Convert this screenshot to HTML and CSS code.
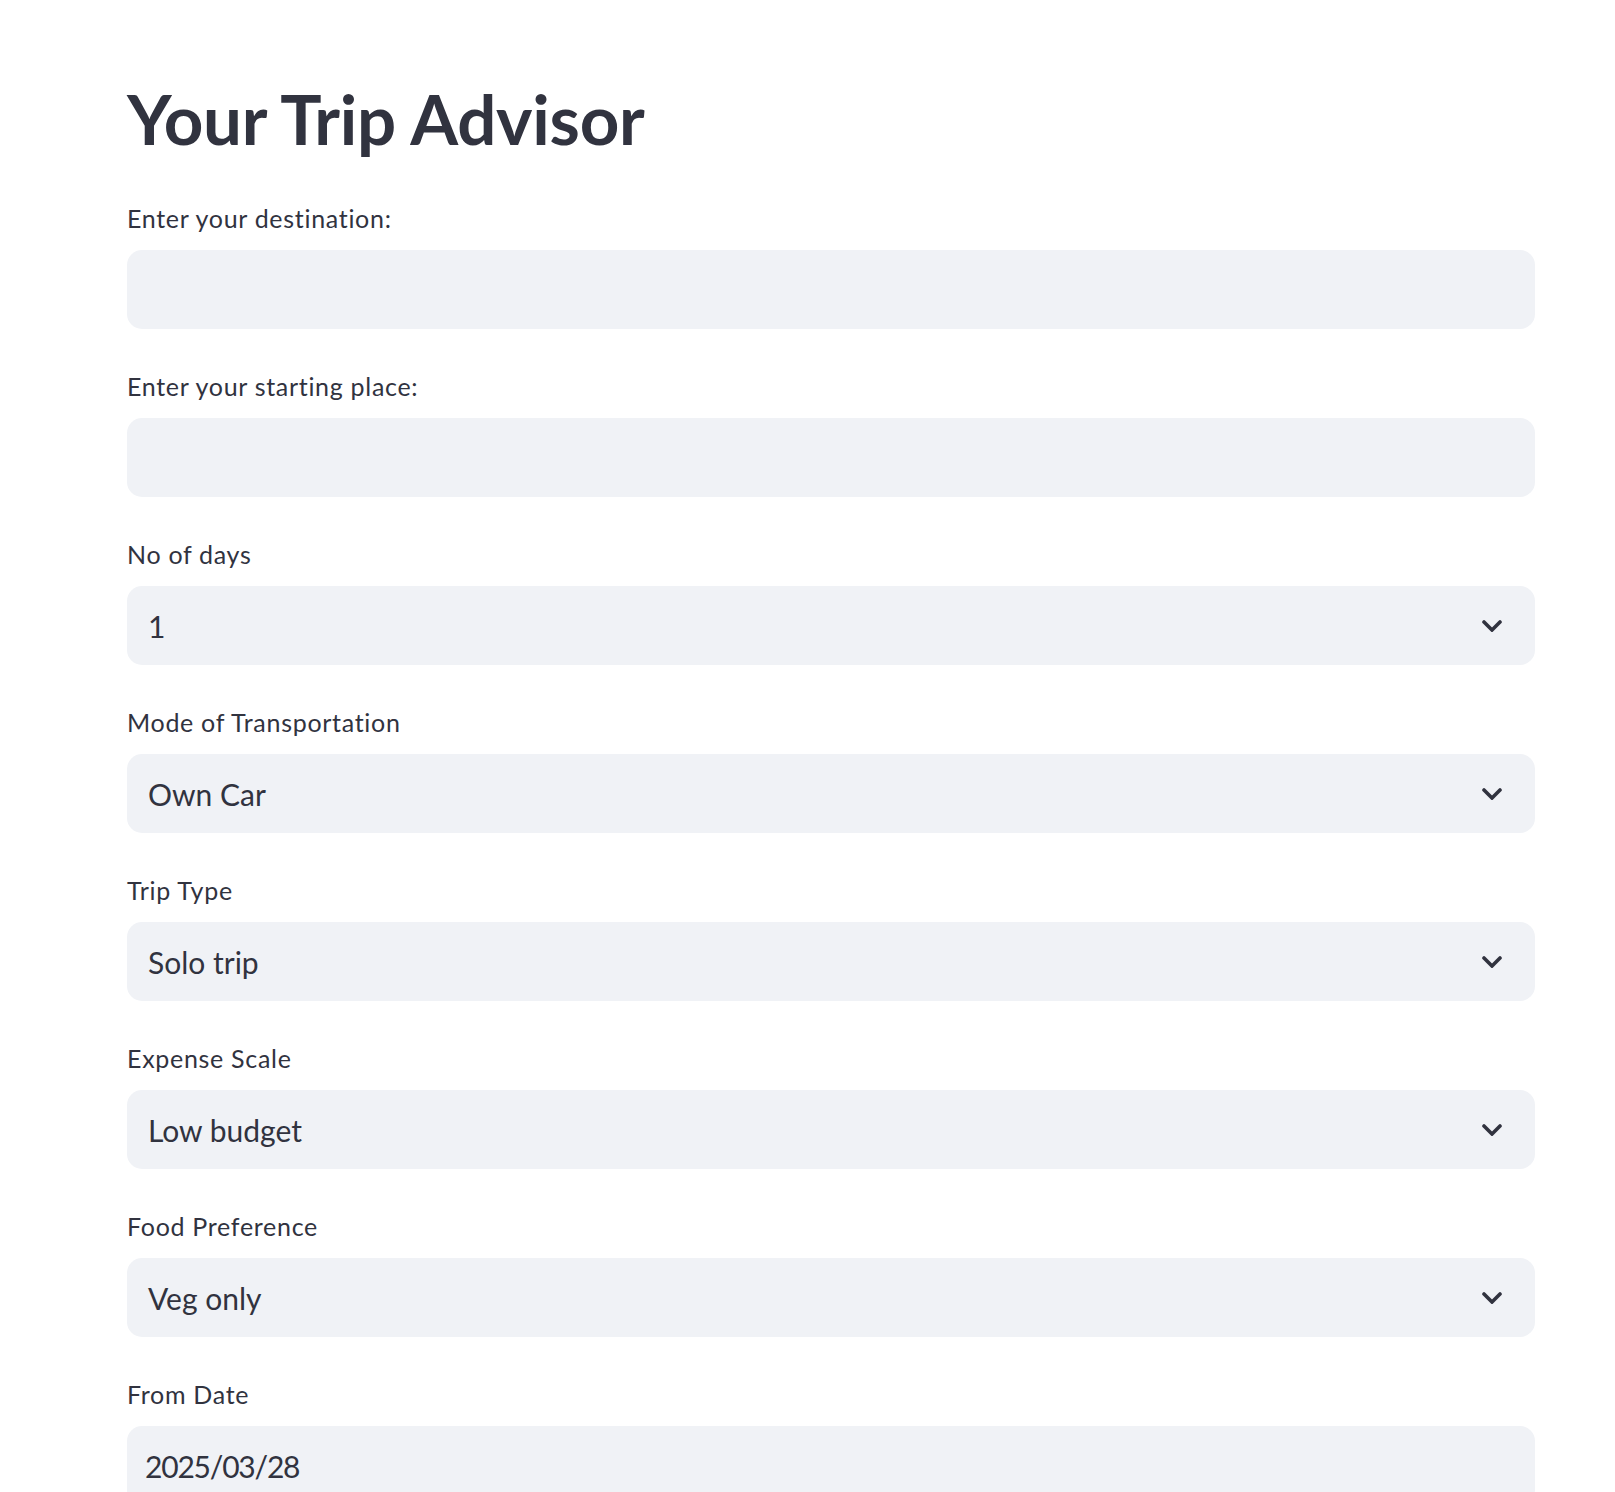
FILE: index.html
```html
<!DOCTYPE html>
<html lang="en">
<head>
<meta charset="utf-8">
<title>Your Trip Advisor</title>
<link rel="stylesheet" href="styles.css">
</head>
<body>
<main class="app">
  <h1 class="title">Your Trip Advisor</h1>
  <div class="form">
    <div class="field">
      <label class="label">Enter your destination:</label>
      <div class="box input"></div>
    </div>
    <div class="field">
      <label class="label">Enter your starting place:</label>
      <div class="box input"></div>
    </div>
    <div class="field">
      <label class="label">No of days</label>
      <div class="box select"><span class="value">1</span>
        <svg class="chev" viewBox="0 0 20 12" width="20" height="12"><polyline points="2,2 10,10 18,2" fill="none" stroke="#31333F" stroke-width="3.6" stroke-linecap="round" stroke-linejoin="miter"/></svg>
      </div>
    </div>
    <div class="field">
      <label class="label">Mode of Transportation</label>
      <div class="box select"><span class="value">Own Car</span>
        <svg class="chev" viewBox="0 0 20 12" width="20" height="12"><polyline points="2,2 10,10 18,2" fill="none" stroke="#31333F" stroke-width="3.6" stroke-linecap="round" stroke-linejoin="miter"/></svg>
      </div>
    </div>
    <div class="field">
      <label class="label">Trip Type</label>
      <div class="box select"><span class="value">Solo trip</span>
        <svg class="chev" viewBox="0 0 20 12" width="20" height="12"><polyline points="2,2 10,10 18,2" fill="none" stroke="#31333F" stroke-width="3.6" stroke-linecap="round" stroke-linejoin="miter"/></svg>
      </div>
    </div>
    <div class="field">
      <label class="label">Expense Scale</label>
      <div class="box select"><span class="value">Low budget</span>
        <svg class="chev" viewBox="0 0 20 12" width="20" height="12"><polyline points="2,2 10,10 18,2" fill="none" stroke="#31333F" stroke-width="3.6" stroke-linecap="round" stroke-linejoin="miter"/></svg>
      </div>
    </div>
    <div class="field">
      <label class="label">Food Preference</label>
      <div class="box select"><span class="value">Veg only</span>
        <svg class="chev" viewBox="0 0 20 12" width="20" height="12"><polyline points="2,2 10,10 18,2" fill="none" stroke="#31333F" stroke-width="3.6" stroke-linecap="round" stroke-linejoin="miter"/></svg>
      </div>
    </div>
    <div class="field">
      <label class="label">From Date</label>
      <div class="box date"><span class="value date-value">2025/03/28</span></div>
    </div>
  </div>
</main>
</body>
</html>
```
FILE: styles.css
```css
html, body {
  margin: 0;
  padding: 0;
  background: #ffffff;
}
body {
  font-family: Lato, "Noto Sans", sans-serif;
  color: #31333F;
}
.app {
  padding: 77px 80px 0 127px;
}
.title {
  margin: 0 0 43px 0;
  font-size: 69px;
  line-height: 83px;
  font-weight: 700;
  letter-spacing: -0.25px;
  height: 83px;
}
.form {
  display: flex;
  flex-direction: column;
  gap: 42px;
}
.field {
  display: flex;
  flex-direction: column;
  gap: 17px;
}
.label {
  display: block;
  font-size: 25px;
  line-height: 30px;
  height: 30px;
  letter-spacing: 0.7px;
}
.box {
  height: 79px;
  background: #F0F2F6;
  border-radius: 15px;
  display: flex;
  align-items: center;
  box-sizing: border-box;
}
.select {
  padding: 0 33px 0 21px;
  justify-content: space-between;
}
.date {
  padding: 0 18px;
}
.value {
  font-size: 30px;
  line-height: 36px;
}
.date-value {
  letter-spacing: -1.2px;
}
.chev {
  display: block;
}
```
